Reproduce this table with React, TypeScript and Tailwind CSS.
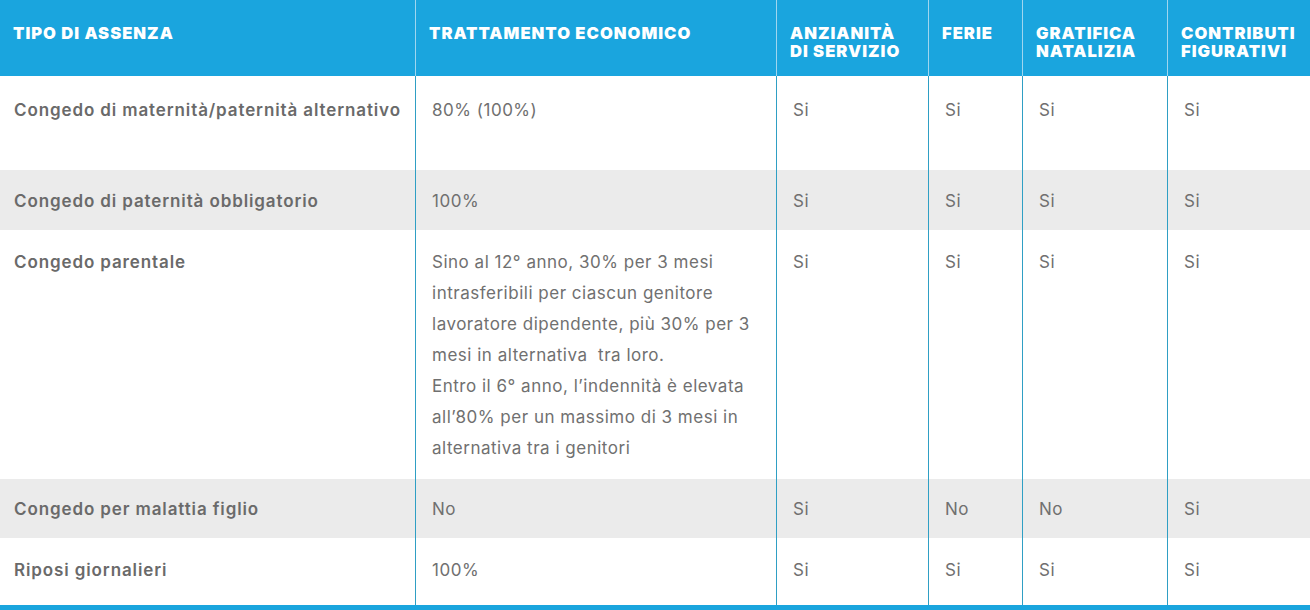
const cols = "grid grid-cols-[415px_361px_152px_94px_145px_143px]";

type Row = {
  tipo: string;
  trattamento: string[];
  anzianita: string;
  ferie: string;
  gratifica: string;
  contributi: string;
  gray?: boolean;
  h: string;
  pt: string;
};

const rows: Row[] = [
  {
    tipo: "Congedo di maternità/paternità alternativo",
    trattamento: ["80% (100%)"],
    anzianita: "Si",
    ferie: "Si",
    gratifica: "Si",
    contributi: "Si",
    h: "h-[94px]",
    pt: "pt-[19px]",
  },
  {
    tipo: "Congedo di paternità obbligatorio",
    trattamento: ["100%"],
    anzianita: "Si",
    ferie: "Si",
    gratifica: "Si",
    contributi: "Si",
    gray: true,
    h: "h-[60px]",
    pt: "pt-[16px]",
  },
  {
    tipo: "Congedo parentale",
    trattamento: [
      "Sino al 12° anno, 30% per 3 mesi intrasferibili per ciascun genitore lavoratore dipendente, più 30% per 3 mesi in alternativa\u00a0 tra loro.",
      "Entro il 6° anno, l’indennità è elevata all’80% per un massimo di 3 mesi in alternativa tra i genitori",
    ],
    anzianita: "Si",
    ferie: "Si",
    gratifica: "Si",
    contributi: "Si",
    h: "h-[249px]",
    pt: "pt-[17px]",
  },
  {
    tipo: "Congedo per malattia figlio",
    trattamento: ["No"],
    anzianita: "Si",
    ferie: "No",
    gratifica: "No",
    contributi: "Si",
    gray: true,
    h: "h-[59px]",
    pt: "pt-[15px]",
  },
  {
    tipo: "Riposi giornalieri",
    trattamento: ["100%"],
    anzianita: "Si",
    ferie: "Si",
    gratifica: "Si",
    contributi: "Si",
    h: "h-[67px]",
    pt: "pt-[17px]",
  },
];

function HeadCell({ children, first }: { children: React.ReactNode; first?: boolean }) {
  return (
    <div
      className={`pt-[24px] pl-[13px] pr-1 text-[16.6px] leading-[18px] font-black uppercase tracking-[0.06em] text-white whitespace-nowrap ${
        first ? "" : "border-l border-[#9fd6ef]"
      }`}
    >
      {children}
    </div>
  );
}

function Cell({ children, first, pt }: { children: React.ReactNode; first?: boolean; pt: string }) {
  return (
    <div
      className={`${pt} pr-3 leading-[31px] ${
        first
          ? "pl-[14px] font-semibold tracking-[0.052em] text-[#6a6a6a] whitespace-nowrap"
          : "pl-4 border-l border-[#2f9fc4] tracking-[0.03em] text-[#707070]"
      }`}
    >
      {children}
    </div>
  );
}

export default function App() {
  return (
    <div className="w-[1310px] h-[610px] bg-white font-['Inter','Liberation_Sans',sans-serif] text-[17px] overflow-hidden">
      <div className={`${cols} h-[76px] bg-[#1aa5de]`}>
        <HeadCell first>Tipo di assenza</HeadCell>
        <HeadCell>Trattamento economico</HeadCell>
        <HeadCell>
          Anzianità
          <br />
          di servizio
        </HeadCell>
        <HeadCell>Ferie</HeadCell>
        <HeadCell>
          Gratifica
          <br />
          natalizia
        </HeadCell>
        <HeadCell>
          Contributi
          <br />
          figurativi
        </HeadCell>
      </div>

      {rows.map((r) => (
        <div key={r.tipo} className={`${cols} ${r.h} ${r.gray ? "bg-[#ebebeb]" : "bg-white"}`}>
          <Cell first pt={r.pt}>
            {r.tipo}
          </Cell>
          <Cell pt={r.pt}>
            {r.trattamento.map((t) => (
              <p key={t}>{t}</p>
            ))}
          </Cell>
          <Cell pt={r.pt}>{r.anzianita}</Cell>
          <Cell pt={r.pt}>{r.ferie}</Cell>
          <Cell pt={r.pt}>{r.gratifica}</Cell>
          <Cell pt={r.pt}>{r.contributi}</Cell>
        </div>
      ))}

      <div className="h-[5px] bg-[#1aa5de]" />
    </div>
  );
}
